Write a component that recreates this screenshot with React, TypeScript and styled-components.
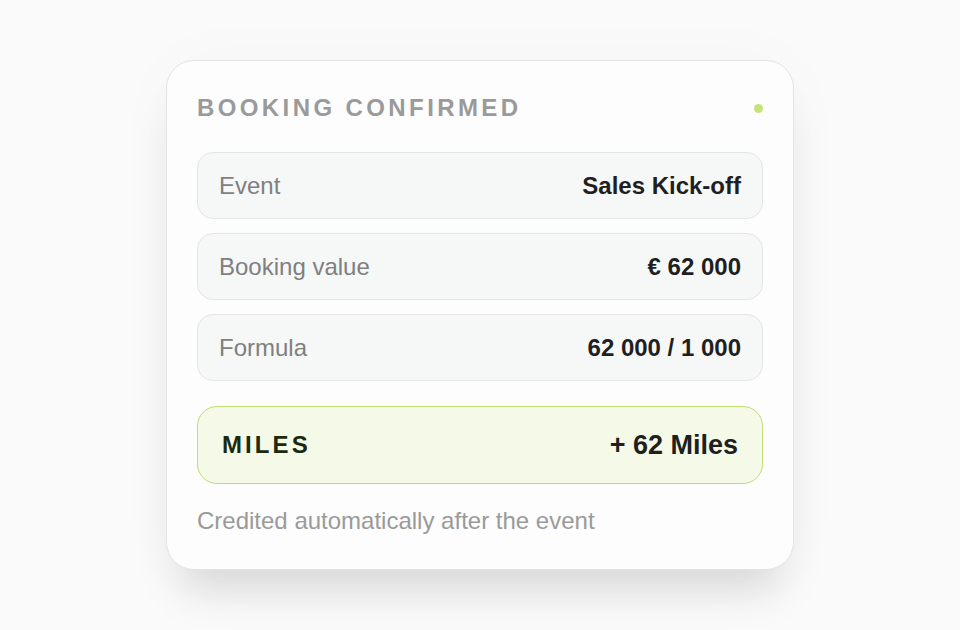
import React from "react";
import styled, { createGlobalStyle } from "styled-components";

const Global = createGlobalStyle`
  html, body { margin: 0; padding: 0; }
  body {
    background: #fafafa;
    font-family: "Liberation Sans", Arial, sans-serif;
    -webkit-font-smoothing: antialiased;
  }
`;

const Page = styled.div`
  width: 960px;
  height: 630px;
  display: flex;
  align-items: center;
  justify-content: center;
  box-sizing: border-box;
`;

const Card = styled.div`
  width: 628px;
  box-sizing: border-box;
  background: #fdfdfd;
  border: 1px solid #e3e3e3;
  border-radius: 28px;
  padding: 30px 30px 34px;
  box-shadow: 0 34px 44px -14px rgba(0, 0, 0, 0.13), 0 0 70px rgba(0, 0, 0, 0.025);
  display: flex;
  flex-direction: column;
`;

const Header = styled.div`
  display: flex;
  align-items: center;
  justify-content: space-between;
  height: 34px;
  margin-bottom: 27px;
`;

const Title = styled.div`
  font-size: 24px;
  font-weight: 700;
  letter-spacing: 3.4px;
  color: #9a9a9a;
`;

const Dot = styled.span`
  width: 9px;
  height: 9px;
  border-radius: 50%;
  background: #c3e27a;
`;

const Rows = styled.div`
  display: flex;
  flex-direction: column;
  gap: 14px;
`;

const Row = styled.div`
  height: 67px;
  box-sizing: border-box;
  border: 1px solid #e5e5e5;
  border-radius: 16px;
  background: #f6f7f7;
  display: flex;
  align-items: center;
  justify-content: space-between;
  padding: 0 21px;
`;

const Label = styled.span`
  font-size: 24px;
  color: #7f7f7f;
`;

const Value = styled.span`
  font-size: 24px;
  font-weight: 700;
  color: #1f1f1f;
`;

const Miles = styled.div`
  margin-top: 25px;
  height: 78px;
  box-sizing: border-box;
  border: 1.5px solid #bfdd72;
  border-radius: 20px;
  background: #f5f9e7;
  display: flex;
  align-items: center;
  justify-content: space-between;
  padding: 0 24px;
`;

const MilesLabel = styled.span`
  font-size: 24px;
  font-weight: 700;
  letter-spacing: 3.1px;
  color: #1a2a0c;
`;

const MilesValue = styled.span`
  font-size: 27px;
  font-weight: 700;
  color: #1f1f1f;
`;

const Footer = styled.div`
  margin-top: 23px;
  font-size: 24px;
  line-height: 28px;
  color: #9a9a9a;
`;

const rows = [
  { label: "Event", value: "Sales Kick-off" },
  { label: "Booking value", value: "€ 62 000" },
  { label: "Formula", value: "62 000 / 1 000" },
];

export default function App() {
  return (
    <>
      <Global />
      <Page>
        <Card>
          <Header>
            <Title>BOOKING CONFIRMED</Title>
            <Dot />
          </Header>
          <Rows>
            {rows.map((r) => (
              <Row key={r.label}>
                <Label>{r.label}</Label>
                <Value>{r.value}</Value>
              </Row>
            ))}
          </Rows>
          <Miles>
            <MilesLabel>MILES</MilesLabel>
            <MilesValue>+ 62 Miles</MilesValue>
          </Miles>
          <Footer>Credited automatically after the event</Footer>
        </Card>
      </Page>
    </>
  );
}
